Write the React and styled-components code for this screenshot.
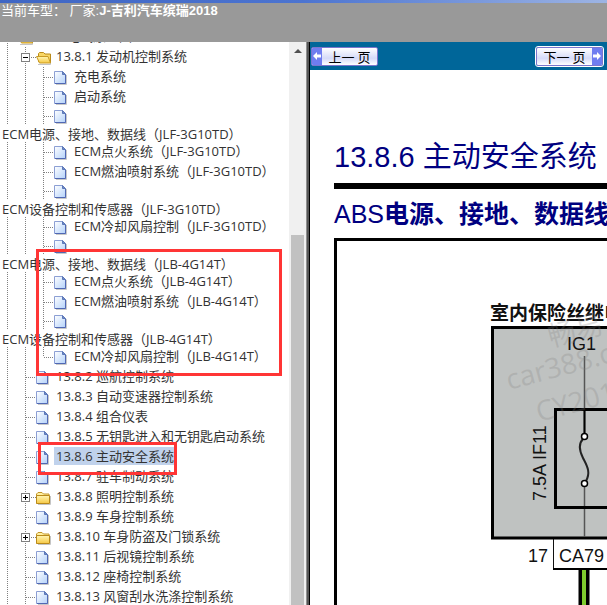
import { useState } from 'react';
import styled, { createGlobalStyle } from 'styled-components';

const GlobalStyle = createGlobalStyle`
  * {
    box-sizing: border-box;
  }
  body {
    margin: 0;
    font-family: 'Open Sans', 'Noto Sans CJK SC', sans-serif;
    font-size: 13px;
    color: #333;
  }
`;

const Page = styled.div`
  display: flex;
  flex-direction: column;
  height: 100vh;
  overflow: hidden;
  background: #fff;
`;

const TopStrip = styled.div`
  flex: none;
  height: 3px;
  background: linear-gradient(90deg, #3f66c4, #4c74d0 50%, #9db4e4);
`;

const Header = styled.header`
  flex: none;
  height: 39px;
  padding-left: 1px;
  background: #999;
  color: #fff;
  font-family: 'Liberation Sans', 'Noto Sans CJK SC', sans-serif;
  line-height: 15px;
  white-space: pre;
`;

const Body = styled.div`
  display: flex;
  flex: 1;
  min-height: 0;
`;

const Sidebar = styled.nav`
  display: flex;
  flex: none;
  width: 306px;
  overflow: hidden;
`;

const TreeArea = styled.div`
  position: relative;
  flex: 1;
  min-width: 0;
  overflow: hidden;
`;

const Tree = styled.ul`
  margin: -15px 0 0;
  padding: 0;
  list-style: none;
`;

const Row = styled.div`
  display: flex;
  align-items: center;
  height: ${({ $short }) => ($short ? '18px' : '20px')};
  white-space: nowrap;
`;

const Guide = styled.span`
  display: flex;
  flex: none;
  align-items: center;
  justify-content: flex-end;
  width: 18px;
  height: 100%;
  background: repeating-linear-gradient(#808080 0 1px, transparent 1px 2px) 7px 0 / 1px
    ${({ $last }) => ($last ? '50%' : '100%')} no-repeat;
`;

const Dots = styled.span`
  width: ${({ $short }) => ($short ? '5px' : '10px')};
  height: 1px;
  background: repeating-linear-gradient(90deg, #808080 0 1px, transparent 1px 2px);
`;

const Toggle = styled.button`
  flex: none;
  width: 9px;
  height: 9px;
  margin-right: 1px;
  padding: 0;
  border: 1px solid #808080;
  background:
    linear-gradient(#000, #000) center / 5px 1px no-repeat,
    linear-gradient(#000, #000) center / ${({ $open }) => ($open ? '0 0' : '1px 5px')} no-repeat,
    #fff;
`;

const IconCell = styled.span`
  flex: none;
  display: flex;
  width: 18px;
`;

const Label = styled.a`
  align-self: flex-start;
  height: 18px;
  padding: 0 0 0 2px;
  line-height: 18px;
  color: inherit;
  text-decoration: none;
  background: ${({ $selected }) => ($selected ? '#c0d2ec' : 'transparent')};
`;

const WrappedLabel = styled(Label)`
  display: block;
  height: 17px;
  white-space: nowrap;
`;

const Mark = styled.div`
  position: absolute;
  top: ${({ $top }) => $top}px;
  left: ${({ $left }) => $left}px;
  width: ${({ $width }) => $width}px;
  height: ${({ $height }) => $height}px;
  border: 3px solid #ff3535;
  pointer-events: none;
`;

const ScrollTrack = styled.div`
  display: flex;
  flex-direction: column;
  flex: none;
  width: 17px;
  padding: 0 2px;
  background: #f0f0f0;
`;

const ScrollArrow = styled.button`
  display: flex;
  align-items: center;
  justify-content: center;
  height: 17px;
  padding: 0;
  border: 0;
  background: none;
`;

const ScrollThumb = styled.div`
  flex: 1;
  margin-top: 176px;
  background: #c1c1c1;
`;

const Splitter = styled.div`
  flex: none;
  width: 4px;
  border-left: 1px solid #909090;
  border-right: 1px solid #000;
  background: #555;
`;

const Content = styled.main`
  display: flex;
  flex: 1;
  flex-direction: column;
  min-width: 0;
  overflow: hidden;
`;

const Toolbar = styled.div`
  display: flex;
  flex: none;
  align-items: center;
  justify-content: space-between;
  height: 28px;
  padding: 0 4px 0 1px;
  background: #069;
`;

const PageButton = styled.button`
  display: flex;
  flex-direction: ${({ $next }) => ($next ? 'row-reverse' : 'row')};
  align-items: stretch;
  width: 67px;
  height: 19px;
  padding: 0;
  overflow: hidden;
  border: 1px solid #7b75cc;
  border-radius: 2px;
  outline: ${({ $next }) => ($next ? '1px solid #fff' : 'none')};
  background: linear-gradient(#fff, #d5daf8 60%, #fff);
  color: #000;
  font-family: 'Noto Sans CJK SC', sans-serif;
  font-size: 13px;
  line-height: 17px;
`;

const PageArrow = styled.span`
  display: flex;
  align-items: center;
  justify-content: center;
  width: 10px;
  background: #6f7df0;
`;

const PageText = styled.span`
  flex: 1;
  text-align: center;
  white-space: pre;
`;

const Sheet = styled.article`
  display: flex;
  flex: 1;
  flex-direction: column;
  min-height: 0;
  padding: 66px 0 0 24px;
  color: #000080;
  font-family: 'Liberation Sans', 'Noto Sans CJK SC', sans-serif;
  white-space: nowrap;
`;

const Title = styled.h1`
  flex: none;
  height: 47px;
  margin: 0;
  font-size: 29px;
  font-weight: 400;
  line-height: 42px;
`;

const Rule = styled.div`
  flex: none;
  height: 6px;
  background: #000;
`;

const Subtitle = styled.h2`
  flex: none;
  height: 49px;
  margin: 0;
  font-size: 25px;
  font-weight: 400;
  line-height: 50px;
`;

const Strong = styled.span`
  font-weight: 700;
`;

const Frame = styled.div`
  display: flex;
  flex: 1;
  min-height: 0;
  border: solid #000;
  border-width: 3px 0 0 3px;
`;

const Diagram = styled.svg`
  flex: 1;
  width: 100%;
  height: 100%;
  overflow: hidden;
`;

const nodes = [
  { level: 1, type: 'open', text: '13.8 电气原理图' },
  { level: 2, type: 'open', toggle: true, text: '13.8.1 发动机控制系统' },
  { level: 3, text: '充电系统' },
  { level: 3, text: '启动系统' },
  { level: 3, wrapped: true, text: 'ECM电源、接地、数据线（JLF-3G10TD）' },
  { level: 3, text: 'ECM点火系统（JLF-3G10TD）' },
  { level: 3, text: 'ECM燃油喷射系统（JLF-3G10TD）' },
  { level: 3, wrapped: true, text: 'ECM设备控制和传感器（JLF-3G10TD）' },
  { level: 3, text: 'ECM冷却风扇控制（JLF-3G10TD）' },
  { level: 3, wrapped: true, text: 'ECM电源、接地、数据线（JLB-4G14T）' },
  { level: 3, text: 'ECM点火系统（JLB-4G14T）' },
  { level: 3, text: 'ECM燃油喷射系统（JLB-4G14T）' },
  { level: 3, wrapped: true, text: 'ECM设备控制和传感器（JLB-4G14T）' },
  { level: 3, last: true, text: 'ECM冷却风扇控制（JLB-4G14T）' },
  { level: 2, text: '13.8.2 巡航控制系统' },
  { level: 2, text: '13.8.3 自动变速器控制系统' },
  { level: 2, text: '13.8.4 组合仪表' },
  { level: 2, text: '13.8.5 无钥匙进入和无钥匙启动系统' },
  { level: 2, text: '13.8.6 主动安全系统' },
  { level: 2, text: '13.8.7 驻车制动系统' },
  { level: 2, type: 'folder', toggle: true, text: '13.8.8 照明控制系统' },
  { level: 2, text: '13.8.9 车身控制系统' },
  { level: 2, type: 'folder', toggle: true, text: '13.8.10 车身防盗及门锁系统' },
  { level: 2, text: '13.8.11 后视镜控制系统' },
  { level: 2, text: '13.8.12 座椅控制系统' },
  { level: 2, text: '13.8.13 风窗刮水洗涤控制系统' },
];

const PageIcon = () => (
  <svg width='14' height='16' viewBox='0 0 14 16'>
    <defs>
      <linearGradient id='sheet' x1='0' y1='0' x2='1' y2='1'>
        <stop offset='0' stopColor='#fff' />
        <stop offset='1' stopColor='#b4d2fa' />
      </linearGradient>
    </defs>
    <path d='M2 15.5h10.5V6' fill='none' stroke='#c8c8c8' />
    <path d='M.5 2.5h8l3 3v9H.5z' fill='url(#sheet)' stroke='#8c9fd4' />
    <path d='M11.5 6v8.500H1' fill='none' stroke='#5068b4' />
    <path d='M8.500 2.500v3h3z' fill='#6f8cc8' stroke='#5d78b8' />
  </svg>
);

const FolderIcon = ({ open }) => (
  <svg width='17' height='16' viewBox='0 0 17 16'>
    <defs>
      <linearGradient id='folder' x1='0' y1='0' x2='0' y2='1'>
        <stop offset='0' stopColor='#fff6b4' />
        <stop offset='1' stopColor='#f6c843' />
      </linearGradient>
    </defs>
    <path d='M2 15.5h12.500V7' fill='none' stroke='#c4c4c4' />
    {open ? (
      <>
        <path d='M2.500 13V4.500l1-1h4l1.500 1.500h5.500v9' fill='#f8d665' stroke='#b98a1b' />
        <path d='M.5 7.500h11.500l2.500 6.500H3.500z' fill='url(#folder)' stroke='#c99a25' />
      </>
    ) : (
      <>
        <path d='M.5 14V5l1.500-1.500h4L7.500 5H13v9z' fill='#fff0a0' stroke='#c29527' />
        <path d='M.5 6.500h13v8H.5z' fill='url(#folder)' stroke='#b98a1b' />
      </>
    )}
  </svg>
);

const TreeNode = ({ node, selected, open, onSelect, onToggle }) => {
  const { level, type, toggle, wrapped, last, text } = node;
  const LabelTag = wrapped ? WrappedLabel : Label;
  const label = (
    <LabelTag
      href='#'
      $selected={selected}
      onClick={(e) => {
        e.preventDefault();
        onSelect();
      }}
    >
      {text}
    </LabelTag>
  );

  return (
    <li>
      <Row $short={wrapped}>
        {Array.from({ length: level }, (_, i) => {
          const own = i === level - 1;
          return (
            <Guide key={i} $last={own && last}>
              {own && toggle && (
                <>
                  <Toggle aria-label={text} $open={open} onClick={onToggle} />
                  <Dots $short />
                </>
              )}
              {own && !toggle && <Dots />}
            </Guide>
          );
        })}
        <IconCell>{type ? <FolderIcon open={type === 'open'} /> : <PageIcon />}</IconCell>
        {!wrapped && label}
      </Row>
      {wrapped && label}
    </li>
  );
};

const Circuit = () => (
  <Diagram fontSize='18' fill='#111'>
    <rect x='155.500' y='86.500' width='400' height='210.500' fill='#bfc2c1' stroke='#000' strokeWidth='3' />
    <text x='153' y='79' fontSize='19' fontWeight='700'>
      室内保险丝继电器盒
    </text>
    <text x='230' y='109'>
      IG1
    </text>
    <path d='M247.500 115V296' stroke='#555' strokeWidth='1.500' />
    <rect x='218.500' y='168.500' width='300' height='98' fill='none' stroke='#000' strokeWidth='3' />
    <path d='M247.500 169V192' stroke='#000' strokeWidth='2' />
    <path d='M247.500 198V240' stroke='#bfc2c1' strokeWidth='3' />
    <path
      d='M246 198C241 203 242 209 246 217S254 231 249 240'
      fill='none'
      stroke='#222'
      strokeWidth='2'
    />
    <circle cx='247.500' cy='195.500' r='3' fill='#fff' stroke='#000' strokeWidth='1.500' />
    <circle cx='247.500' cy='242.500' r='3' fill='#fff' stroke='#000' strokeWidth='1.500' />
    <text transform='translate(209 260) rotate(-90)'>7.5A IF11</text>
    <path d='M216.500 298V328' stroke='#111' />
    <path d='M216 328H600' stroke='#000' strokeWidth='2' />
    <text x='191' y='321'>
      17
    </text>
    <text x='222' y='321'>
      CA79
    </text>
    <path d='M247 329V2000' stroke='#000' strokeWidth='11' />
    <path d='M247 329V2000' stroke='#7fcc2e' strokeWidth='4' />
    <g fill='#808080' fillOpacity='0.25' fontSize='28' fontFamily="'Open Sans', 'Noto Sans CJK SC', sans-serif">
      <text transform='translate(214 106) rotate(-15)'>畅易</text>
      <text transform='translate(172 149) rotate(-15)'>car388.com</text>
      <text transform='translate(202 181) rotate(-15)'>CY2018</text>
    </g>
  </Diagram>
);

const App = () => {
  const [selected, setSelected] = useState('13.8.6 主动安全系统');
  const [opened, setOpened] = useState({ '13.8.1 发动机控制系统': true });

  return (
    <>
      <GlobalStyle />
      <Page>
        <TopStrip />
        <Header>
          当前车型： 厂家:<b>J-吉利汽车缤瑞2018</b>
        </Header>

        <Body>
          <Sidebar>
            <TreeArea>
              <Tree>
                {nodes.map((node) => (
                  <TreeNode
                    key={node.text}
                    node={node}
                    selected={selected === node.text}
                    open={opened[node.text]}
                    onSelect={() => setSelected(node.text)}
                    onToggle={() => setOpened({ ...opened, [node.text]: !opened[node.text] })}
                  />
                ))}
              </Tree>
              <Mark $top={207} $left={36} $width={246} $height={127} />
              <Mark $top={400} $left={38} $width={139} $height={33} />
            </TreeArea>
            <ScrollTrack>
              <ScrollArrow aria-label='向上滚动'>
                <svg width='8' height='4' viewBox='0 0 8 4'>
                  <path d='M0 4L4 0l4 4z' fill='#505050' />
                </svg>
              </ScrollArrow>
              <ScrollThumb />
            </ScrollTrack>
          </Sidebar>
          <Splitter />

          <Content>
            <Toolbar>
              <PageButton>
                <PageArrow>
                  <svg width='8' height='8' viewBox='0 0 8 8'>
                    <path d='M0 4l4-4v2.500h4v3H4V8z' fill='#fff' />
                  </svg>
                </PageArrow>
                <PageText>上一 页</PageText>
              </PageButton>
              <PageButton $next>
                <PageArrow>
                  <svg width='8' height='8' viewBox='0 0 8 8'>
                    <path d='M8 4L4 0v2.500H0v3h4V8z' fill='#fff' />
                  </svg>
                </PageArrow>
                <PageText>下一 页</PageText>
              </PageButton>
            </Toolbar>

            <Sheet>
              <Title>13.8.6 主动安全系统</Title>
              <Rule />
              <Subtitle>
                ABS<Strong>电源、接地、数据线</Strong>
              </Subtitle>
              <Frame>
                <Circuit />
              </Frame>
            </Sheet>
          </Content>
        </Body>
      </Page>
    </>
  );
};

export default App;
